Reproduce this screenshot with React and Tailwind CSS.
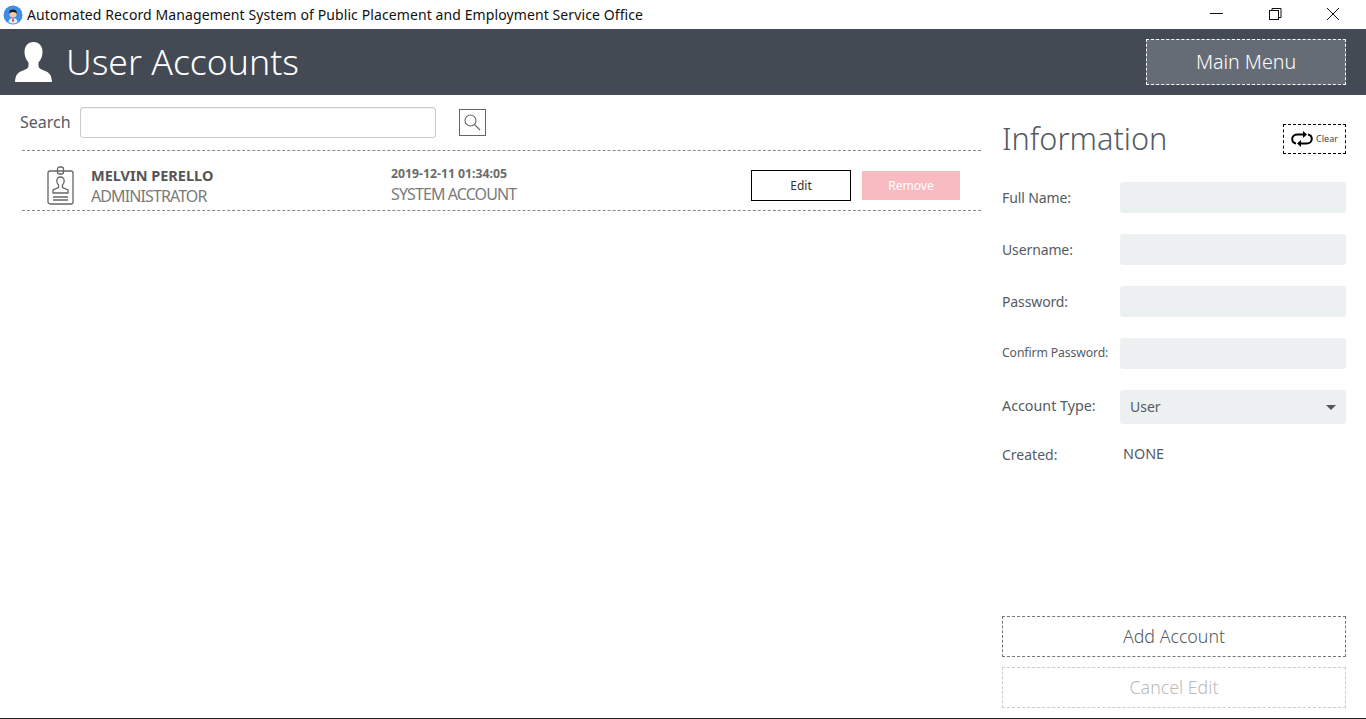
import React from "react";

function Field({ label, small }) {
  return (
    <div className="flex items-center h-[31px] mb-[21px]">
      <div className={`w-[118px] shrink-0 text-[#555b63] ${small ? "text-[12.200px] tracking-[-0.1px] mt-[-1px]" : "text-[14px] tracking-[-0.12px] mt-[-1px]"}`}>{label}</div>
      <div className="w-[226px] h-[31px] rounded-[3px] bg-[#ecf0f1]" />
    </div>
  );
}

export default function App() {
  return (
    <div className="w-[1366px] h-[719px] overflow-hidden bg-white flex flex-col font-['Noto_Sans',sans-serif]">
      <div className="h-[29px] shrink-0 flex items-center">
        <svg width="20" height="20" viewBox="0 0 20 20" className="ml-[3px] mr-[4px]">
          <circle cx="10" cy="10" r="9.500" fill="#3f8fe8" />
          <path d="M5.500 17 Q6 13 10 13 Q14 13 14.500 17 Q10 20 5.500 17Z" fill="#e8eef5" />
          <path d="M9.400 13.200h1.200l.3 3-.9.8-.9-.8z" fill="#c0392b" />
          <circle cx="10" cy="9" r="3.600" fill="#f3c9a5" />
          <path d="M6.200 9 Q5.800 4.600 10 4.600 Q14.200 4.600 13.800 9 Q13 7 10 7 Q7 7 6.200 9Z" fill="#1d1d1d" />
        </svg>
        <div className="text-[14px] text-[#111] whitespace-nowrap tracking-[0.1px]">Automated Record Management System of Public Placement and Employment Service Office</div>
        <div className="ml-auto mr-[10px] flex items-center">
          <svg width="46" height="29" viewBox="0 0 46 29"><path d="M16 13.500h13" stroke="#111" strokeWidth="1" /></svg>
          <svg width="46" height="29" viewBox="0 0 46 29" className="ml-[12px]" fill="none" stroke="#111" strokeWidth="1">
            <rect x="17.500" y="10.500" width="9" height="9" />
            <path d="M20 10.500V8.500h9v9h-2.500" />
          </svg>
          <svg width="46" height="29" viewBox="0 0 46 29" className="ml-[12px]" fill="none" stroke="#111" strokeWidth="1">
            <path d="M17 8l12 12M29 8L17 20" />
          </svg>
        </div>
      </div>

      <div className="h-[66px] shrink-0 bg-[#434a54] flex items-center pl-[15px] pr-[20px]">
        <svg width="37" height="40" viewBox="0 0 37 40" fill="#fff" className="mb-[1px]">
          <path d="M18.500 0C12.500 0 9.500 4.500 9.500 10C9.500 14 11 18 13.500 20.500V24C13.500 26 11 27.500 7 29C3 30.500 .5 32.500 0 40H37C36.500 32.500 34 30.500 30 29C26 27.500 23.500 26 23.500 24V20.500C26 18 27.500 14 27.500 10C27.500 4.500 24.500 0 18.500 0Z" />
        </svg>
        <div className="ml-[14px] text-[35.600px] font-light text-white leading-none mt-[-1px]">User Accounts</div>
        <div className="ml-auto w-[200px] h-[46px] pb-[1px] border border-dashed border-white bg-[#656c75] flex items-center justify-center text-[19.600px] font-light text-white">Main Menu</div>
      </div>

      <div className="flex-1 flex border-b border-[#222]">
        <div className="w-[1002px] shrink-0 pt-[12px] pl-[20px]">
          <div className="flex items-center h-[31px]">
            <div className="w-[60px] text-[16px] text-[#555b63] mt-[-1px]">Search</div>
            <div className="w-[356px] h-[31px] rounded-[3px] border border-[#ccc] shadow-[inset_0_1px_2px_rgba(0,0,0,0.06)]" />
            <div className="ml-[23px] w-[27px] h-[27px] border border-[#666] flex items-center justify-center">
              <svg width="19" height="19" viewBox="0 0 19 19" fill="none" stroke="#666" strokeWidth="1.100">
                <circle cx="7.500" cy="7.500" r="5.500" />
                <path d="M11.500 11.500L17 17" />
              </svg>
            </div>
          </div>
          <div className="ml-[2px] w-[959px] mt-[12px] h-[61px] pt-[10px] border-y border-dashed border-[#888] flex items-center">
            <svg width="28" height="40" viewBox="0 0 28 40" fill="none" stroke="#666" strokeWidth="1.300" className="ml-[25px]">
              <rect x="1" y="5" width="25" height="33" rx="2" />
              <rect x="10.500" y="1" width="6" height="7" rx="2" />
              <path d="M13.500 11C11 11 9.800 12.800 9.800 15C9.800 16.800 10.500 18 11.500 19V21.500L6 24V27H21V24L15.500 21.500V19C16.500 18 17.200 16.800 17.200 15C17.200 12.800 16 11 13.500 11Z" />
              <path d="M6 31H21M6 34H21" />
            </svg>
            <div className="ml-[16px] w-[300px] mt-[1px]">
              <div className="text-[14.500px] font-bold text-[#555] leading-[20px]">MELVIN PERELLO</div>
              <div className="text-[16px] text-[#7a7a7a] leading-[22px] tracking-[-0.9px]">ADMINISTRATOR</div>
            </div>
            <div className="w-[360px] mt-[-1px]">
              <div className="text-[12.250px] font-bold text-[#6b6b6b] leading-[18px]">2019-12-11 01:34:05</div>
              <div className="text-[16px] text-[#7a7a7a] leading-[22px] tracking-[-0.9px]">SYSTEM ACCOUNT</div>
            </div>
            <div className="w-[100px] h-[31px] border border-black flex items-center justify-center text-[12px] text-[#333]">Edit</div>
            <div className="ml-[11px] w-[98px] h-[29px] bg-[#f8bbc2] flex items-center justify-center text-[12px] text-white">Remove</div>
          </div>
        </div>

        <div className="w-[344px] shrink-0 pt-[29px] flex flex-col">
          <div className="flex items-center justify-between h-[30px] mb-[28px]">
            <div className="text-[30.700px] font-light text-[#555b63] leading-none mt-[-2px]">Information</div>
            <div className="w-[63px] h-[30px] border border-dashed border-black flex items-center justify-center">
              <svg width="22" height="16" viewBox="0 0 22 16" fill="none" stroke="#000" strokeWidth="2" className="mr-[3px]">
                <path d="M5 12.500C2.500 12 1.200 10.300 1.200 8C1.200 5.200 3.500 3.500 6.500 3.500H13" />
                <path d="M17 3.500C19.500 4 20.800 5.700 20.800 8C20.800 10.800 18.500 12.500 15.500 12.500H9" />
                <path d="M12 0L16 3.500L12 7Z" fill="#000" stroke="none" />
                <path d="M10 9L6 12.500L10 16Z" fill="#000" stroke="none" />
              </svg>
              <span className="text-[9px] text-[#444]">Clear</span>
            </div>
          </div>
          <Field label="Full Name:" />
          <Field label="Username:" />
          <Field label="Password:" />
          <Field label="Confirm Password:" small />
          <div className="flex items-center h-[34px]">
            <div className="w-[118px] shrink-0 text-[14.300px] text-[#555b63] mt-[-2px]">Account Type:</div>
            <div className="w-[226px] h-[34px] rounded-[3px] bg-[#ecf0f1] flex items-center pl-[10px] pr-[10px] text-[14px] text-[#555b63]">
              <span className="mt-[-2px]">User</span>
              <span className="ml-auto w-0 h-0 border-x-[5px] border-x-transparent border-t-[5px] border-t-[#555]" />
            </div>
          </div>
          <div className="flex items-center h-[20px] mt-[20px] text-[14px] text-[#555b63]">
            <div className="w-[121px]">Created:</div>
            <div className="text-[14.400px]">NONE</div>
          </div>
          <div className="mt-auto mb-[10px] h-[41px] pb-[1px] border border-dashed border-[#777] flex items-center justify-center text-[17.800px] font-light text-[#555b63]">Add Account</div>
          <div className="mb-[10px] h-[41px] pb-[1px] border border-dashed border-[#ccc] flex items-center justify-center text-[17.800px] font-light text-[#bbb]">Cancel Edit</div>
        </div>
      </div>
    </div>
  );
}
